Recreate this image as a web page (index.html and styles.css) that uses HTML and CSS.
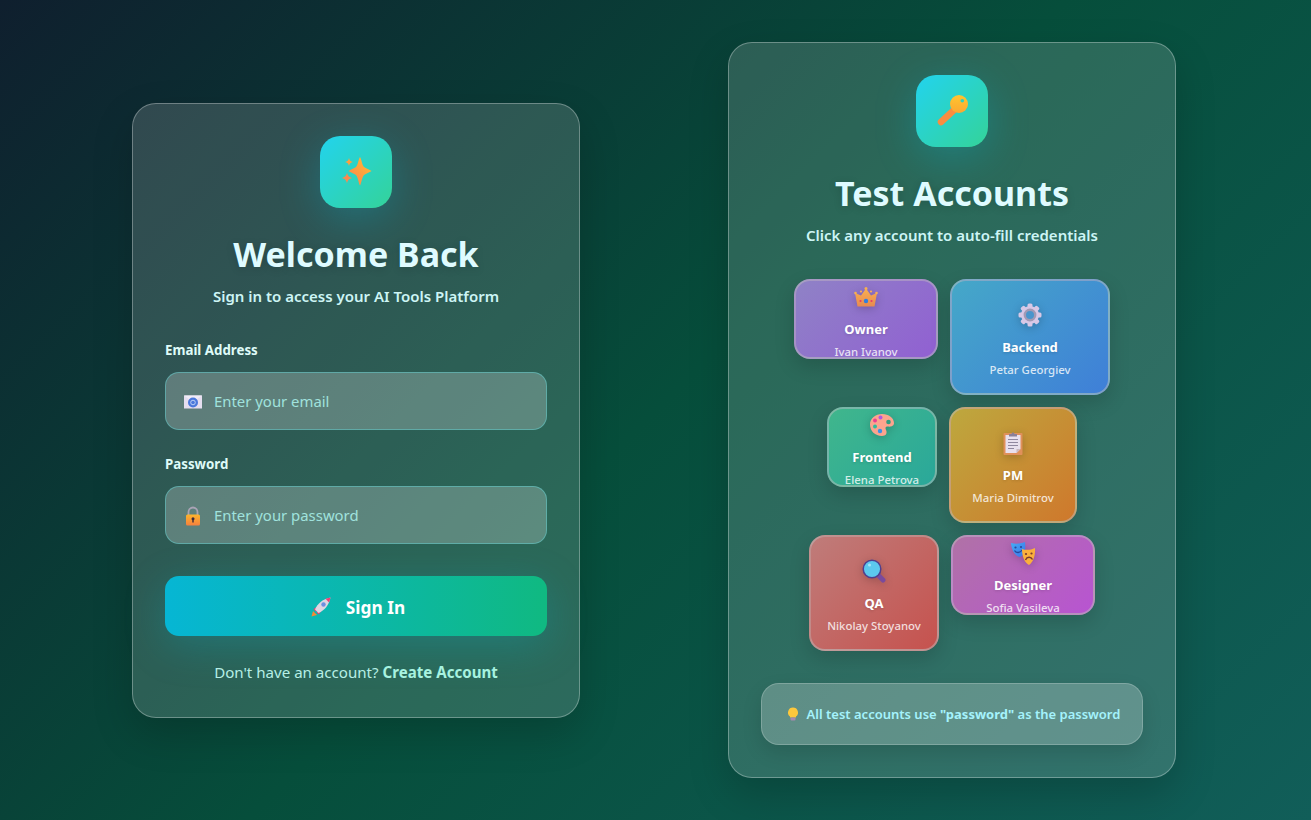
FILE: index.html
```html
<!DOCTYPE html>
<html>
<head>
<meta charset="utf-8"/>
<title>AI Tools Platform - Sign In</title>
<link rel="stylesheet" href="styles.css">
</head>
<body>

<svg class="defs" width="0" height="0" aria-hidden="true">
  <defs>
    <linearGradient id="gold" x1="1" y1="0" x2="0" y2="1"><stop offset="0" stop-color="#ffc030"/><stop offset="1" stop-color="#fb7f50"/></linearGradient>
    <linearGradient id="keyHead" x1="0" y1="0" x2="0" y2="1"><stop offset="0" stop-color="#ffc52e"/><stop offset="1" stop-color="#fba832"/></linearGradient>
    <linearGradient id="lockBody" x1="0" y1="0" x2="0" y2="1"><stop offset="0" stop-color="#fcb52c"/><stop offset="1" stop-color="#f5803e"/></linearGradient>
    <linearGradient id="crownBody" x1="0" y1="0" x2="0" y2="1"><stop offset="0" stop-color="#f8b050"/><stop offset="1" stop-color="#e88a50"/></linearGradient>
    <linearGradient id="blueMask" x1="0" y1="0" x2="1" y2="1"><stop offset="0" stop-color="#42b0f5"/><stop offset="1" stop-color="#3f6fe8"/></linearGradient>
  </defs>
</svg>

<main class="page">

  <section class="card login">
    <div class="logo">
      <svg class="logo-icon" viewBox="0 0 32 32">
        <path fill="url(#gold)" d="M20 1C21.500 3 22 9 24 11C26 12.500 29.500 13.500 31.500 15C29.500 16.500 26 17.500 24 19C22 21 21.500 27 20 29.500C18.500 27 18 21 16 19C14 17.500 10.500 16.500 8.500 15C10.500 13.500 14 12.500 16 11C18 9 18.500 3 20 1Z"/>
        <path fill="#fba040" d="M9 2C9.500 4.500 10.500 5.500 13 6C10.500 6.500 9.500 7.500 9 10C8.500 7.500 7.500 6.500 5 6C7.500 5.500 8.500 4.500 9 2Z"/>
        <path fill="#fb8a50" d="M7 16.500C7.700 20 9 21.300 12.500 22C9 22.700 7.700 24 7 27.500C6.300 24 5 22.700 1.500 22C5 21.300 6.300 20 7 16.500Z"/>
      </svg>
    </div>
    <h1>Welcome Back</h1>
    <p class="subtitle">Sign in to access your AI Tools Platform</p>

    <form class="login-form">
      <label class="field-label" for="email">Email Address</label>
      <div class="field">
        <svg class="field-icon" viewBox="0 0 20 20">
          <rect x="1" y="3.500" width="18" height="13" fill="#e6def0"/>
          <path d="M1 3.500L10 10L19 3.500" fill="#f2edf7"/>
          <circle cx="10" cy="10.500" r="5" fill="#4c78dc"/>
          <circle cx="10" cy="10.500" r="2.300" fill="none" stroke="#bcd0f5" stroke-width="1"/>
        </svg>
        <input id="email" type="email" placeholder="Enter your email">
      </div>

      <label class="field-label" for="password">Password</label>
      <div class="field">
        <svg class="field-icon" viewBox="0 0 20 20">
          <path d="M5.500 10V6a4.500 4.500 0 0 1 9 0v4" fill="none" stroke="#a9a3b5" stroke-width="1.800"/>
          <rect x="3" y="8.500" width="14" height="11" rx="1.500" fill="url(#lockBody)"/>
          <circle cx="10" cy="12.800" r="1.500" fill="#3b2a3a"/>
          <rect x="9.300" y="13" width="1.400" height="3.500" fill="#3b2a3a"/>
        </svg>
        <input id="password" type="password" placeholder="Enter your password">
      </div>

      <button class="submit" type="button">
        <svg class="submit-icon" viewBox="0 0 22 22">
          <path d="M1.500 20.500L3 15L7 19Z" fill="#f58a35"/>
          <path d="M3.500 13L9 9.500L6 16Z" fill="#ee3f78"/>
          <path d="M9 18.500L12.500 13L6.500 16.500Z" fill="#ee3f78"/>
          <path d="M5 13.500C7.500 7.500 13 3 20.500 1.500C19 9 14.500 14.500 8.500 17Z" fill="#e0d6e2"/>
          <path d="M15.500 2.800L20.500 1.500C20.200 3.300 19.700 5 19 6.500Z" fill="#ee3f78"/>
          <circle cx="13.500" cy="8.500" r="2.200" fill="#6f8fe0"/>
        </svg>
        <span>Sign In</span>
      </button>
    </form>

    <p class="signup">Don't have an account? <a href="#">Create Account</a></p>
  </section>

  <section class="card accounts">
    <div class="logo">
      <svg class="logo-icon" viewBox="0 0 32 32">
        <path d="M18 15L5 27" fill="none" stroke="#f98d40" stroke-width="6.500" stroke-linecap="round"/>
        <circle cx="23" cy="9" r="9" fill="url(#keyHead)"/>
        <circle cx="26.300" cy="5.700" r="1.800" fill="#2dd0c0"/>
      </svg>
    </div>
    <h1>Test Accounts</h1>
    <p class="subtitle">Click any account to auto-fill credentials</p>

    <div class="account-list">

      <button class="account owner" type="button">
        <svg class="account-icon" viewBox="0 0 24 24">
          <path d="M3.500 21.500L1 8L7 10.500L12 3.500L17 10.500L23 8L20.500 21.500Z" fill="url(#crownBody)"/>
          <circle cx="1.500" cy="8" r="1.300" fill="#f8b050"/><circle cx="7" cy="6.500" r="1.100" fill="#f8b050"/><circle cx="12" cy="3.500" r="1.500" fill="#f8b050"/><circle cx="17" cy="6.500" r="1.100" fill="#f8b050"/><circle cx="22.500" cy="8" r="1.300" fill="#f8b050"/>
          <circle cx="12" cy="16" r="2.200" fill="#2f7ee0"/><circle cx="6.500" cy="16" r="1.100" fill="#e83a6a"/><circle cx="17.500" cy="16" r="1.100" fill="#e83a6a"/>
        </svg>
        <span class="role">Owner</span>
        <span class="person">Ivan Ivanov</span>
      </button>

      <button class="account backend" type="button">
        <svg class="account-icon" viewBox="0 0 24 24">
          <g fill="#d8c8e6">
            <circle cx="12" cy="12" r="9"/>
            <rect x="9.500" y="0.500" width="5" height="23" rx="1.500"/>
            <rect x="9.500" y="0.500" width="5" height="23" rx="1.500" transform="rotate(45 12 12)"/>
            <rect x="9.500" y="0.500" width="5" height="23" rx="1.500" transform="rotate(90 12 12)"/>
            <rect x="9.500" y="0.500" width="5" height="23" rx="1.500" transform="rotate(135 12 12)"/>
          </g>
          <circle cx="12" cy="12" r="5.200" fill="#4a95cc" stroke="#a19ab5" stroke-width="2.400"/>
        </svg>
        <span class="role">Backend</span>
        <span class="person">Petar Georgiev</span>
      </button>

      <button class="account frontend" type="button">
        <svg class="account-icon" viewBox="0 0 24 24">
          <path d="M12 1C19 1 24 5 24 10C24 13.500 20 14 18 13.500C15.500 13 15 15 16 17C17.500 20 16 23 12 23C5 23 0 18 0 11.500C0 5.500 5.500 1 12 1Z" fill="#fba48e"/>
          <circle cx="10.500" cy="4.500" r="2" fill="#b056e0"/>
          <circle cx="5" cy="7.500" r="2" fill="#ee3f90"/>
          <circle cx="5" cy="13.500" r="2" fill="#2dbd9e"/>
          <circle cx="10" cy="18" r="2.200" fill="#3a90e8"/>
          <circle cx="18.500" cy="9" r="2.300" fill="#2d9c80"/>
        </svg>
        <span class="role">Frontend</span>
        <span class="person">Elena Petrova</span>
      </button>

      <button class="account pm" type="button">
        <svg class="account-icon" viewBox="0 0 24 24">
          <rect x="2.500" y="2" width="19" height="22" rx="1" fill="#e0905a"/>
          <path d="M4.500 4H19.500V18L15.500 22H4.500Z" fill="#e8e0ee"/>
          <path d="M15.500 22V18H19.500Z" fill="#c8b8c0"/>
          <path d="M7 8.500H17M7 11.500H17M7 14.500H17M7 17.500H13" stroke="#9088a0" stroke-width="1"/>
          <path d="M8 5V3H10.500A1.500 1.500 0 0 1 13.500 3H16V5.500H8Z" fill="#8a8098"/>
        </svg>
        <span class="role">PM</span>
        <span class="person">Maria Dimitrov</span>
      </button>

      <button class="account qa" type="button">
        <svg class="account-icon" viewBox="0 0 24 24">
          <path d="M16 16L21 21" stroke="#7a4a9c" stroke-width="5" stroke-linecap="round"/>
          <circle cx="10" cy="10" r="8.800" fill="#5cc8ee" stroke="#4f3f8e" stroke-width="1.500"/>
          <circle cx="7.500" cy="6" r="1.500" fill="#a4e6fa"/>
        </svg>
        <span class="role">QA</span>
        <span class="person">Nikolay Stoyanov</span>
      </button>

      <button class="account designer" type="button">
        <svg class="account-icon wide" viewBox="0 0 26 24">
          <path d="M1 2C5 3 10 3 15 1C16 8 15 14 10 16C5 15 1.500 9 1 2Z" fill="url(#blueMask)"/>
          <circle cx="5.500" cy="6.500" r="1.100" fill="#24489c"/><circle cx="11" cy="6" r="1.100" fill="#24489c"/>
          <path d="M4.500 9.500C6 12.500 10.500 12 12 9" fill="none" stroke="#24489c" stroke-width="1.300"/>
          <path d="M12 8C16 9.500 21 9 25 7C25.500 14 23.500 21 19 24C15 22 12 16 12 8Z" fill="#fbb03c"/>
          <circle cx="16" cy="13" r="1.100" fill="#7a3a30"/><circle cx="21.500" cy="12.500" r="1.100" fill="#7a3a30"/>
          <path d="M15.500 19C17 15.500 21 15.500 22.500 18.500" fill="none" stroke="#7a3a30" stroke-width="1.400"/>
        </svg>
        <span class="role">Designer</span>
        <span class="person">Sofia Vasileva</span>
      </button>

    </div>

    <p class="note">
      <svg class="note-icon" viewBox="0 0 12 14">
        <path d="M6 0.500A5 5 0 0 1 9 9.500V10.500H3V9.500A5 5 0 0 1 6 0.500Z" fill="#fcc83c"/>
        <rect x="3.500" y="10.500" width="5" height="3" rx="1" fill="#a58ab0"/>
      </svg>
      <span>All test accounts use <strong>"password"</strong> as the password</span>
    </p>
  </section>

</main>

</body>
</html>
```

FILE: styles.css
```css
* {
   box-sizing: border-box;
}

body {
   margin: 0;
   height: 820px;
   overflow: hidden;
   font-family: "Noto Sans", sans-serif;
   background: linear-gradient(135deg, #0f1f2e 0%, #064e3b 50%, #115e59 100%);
}

.defs {
   display: block;
   height: 0;
}

.page {
   height: 820px;
   padding-right: 3px;
   display: flex;
   justify-content: center;
   align-items: center;
   gap: 148px;
}

.card {
   width: 448px;
   padding: 32px;
   display: flex;
   flex-direction: column;
   align-items: center;
   border: 1px solid rgba(255, 255, 255, 0.3);
   border-radius: 24px;
   background: rgba(255, 255, 255, 0.15);
   box-shadow: 0 16px 40px rgba(0, 0, 0, 0.18);
}

.logo {
   width: 72px;
   height: 72px;
   display: flex;
   align-items: center;
   justify-content: center;
   border-radius: 20px;
   background: linear-gradient(135deg, #22d3ee, #34d399);
   box-shadow: 0 10px 40px rgba(6, 182, 212, 0.3);
}

.logo-icon {
   width: 32px;
   height: 32px;
}

h1 {
   margin: 22px 0 0;
   font-size: 34px;
   line-height: 48px;
   font-weight: 700;
   color: #dffbff;
   text-shadow: 0 2px 8px rgba(0, 0, 0, 0.15);
}

.subtitle {
   margin: 8px 0 0;
   font-size: 15px;
   line-height: 20px;
   font-weight: 600;
   color: #cdf5f5;
}

.login-form {
   width: 100%;
   margin-top: 35px;
}

.field-label {
   display: block;
   font-size: 13.3px;
   line-height: 18px;
   font-weight: 700;
   color: #dffbf8;
}

.field {
   position: relative;
   margin: 13px 0 25px;
}

.field input {
   display: block;
   width: 100%;
   height: 58px;
   padding: 0 16px 0 48px;
   font-family: inherit;
   font-size: 14.9px;
   color: #dffbf8;
   border: 1px solid rgba(100, 210, 210, 0.5);
   border-radius: 14px;
   background: rgba(255, 255, 255, 0.23);
}

.field input::placeholder {
   color: #a0e2dd;
}

.field-icon {
   position: absolute;
   left: 18px;
   top: 20px;
   width: 20px;
   height: 20px;
}

.submit {
   width: 100%;
   height: 60px;
   margin-top: 32px;
   padding: 3px 0 0 3px;
   display: flex;
   align-items: center;
   justify-content: center;
   gap: 14px;
   border: none;
   border-radius: 14px;
   font-family: inherit;
   font-size: 17.3px;
   font-weight: 700;
   color: #fff;
   background: linear-gradient(90deg, #06b6d4, #10b981);
   box-shadow: 0 10px 40px rgba(6, 182, 212, 0.25);
}

.submit-icon {
   width: 22px;
   height: 22px;
}

.signup {
   margin: 23px 0 0;
   font-size: 15.1px;
   line-height: 26px;
   color: #b6efe6;
}

.signup a {
   font-weight: 700;
   color: #a7f3e0;
   text-decoration: none;
}

.account-list {
   width: 100%;
   margin-top: 34px;
   display: flex;
   flex-wrap: wrap;
   justify-content: center;
   align-items: flex-start;
   gap: 12px;
}

.account {
   height: 116px;
   padding: 6px 0 0;
   display: flex;
   flex-direction: column;
   align-items: center;
   justify-content: center;
   border: 2px solid rgba(190, 190, 190, 0.5);
   border-radius: 16px;
   font-family: inherit;
   color: #fff;
   box-shadow: 0 8px 20px rgba(0, 0, 0, 0.15);
}

.owner {
   width: 144px;
   height: 80px;
   background: linear-gradient(135deg, #8f82c6, #9160d2);
}

.backend {
   width: 160px;
   background: linear-gradient(135deg, #45a8c8, #3f7fd8);
}

.frontend {
   width: 110px;
   height: 80px;
   background: linear-gradient(135deg, #40b68c, #2aa89a);
}

.pm {
   width: 128px;
   background: linear-gradient(135deg, #bda83e, #cf782c);
}

.qa {
   width: 130px;
   background: linear-gradient(135deg, #bf7c7a, #c6524e);
}

.designer {
   width: 144px;
   height: 80px;
   background: linear-gradient(135deg, #b072a6, #b854d2);
}

.account-icon {
   flex: none;
   width: 24px;
   height: 24px;
   filter: drop-shadow(0 2px 4px rgba(0, 0, 0, 0.2));
}

.account-icon.wide {
   width: 26px;
}

.role {
   flex: none;
   margin-top: 11px;
   font-size: 13px;
   line-height: 18px;
   font-weight: 700;
   text-shadow: 0 1px 3px rgba(0, 0, 0, 0.15);
}

.person {
   flex: none;
   margin-top: 6px;
   font-size: 11.4px;
   line-height: 15px;
   font-weight: 500;
   color: rgba(255, 255, 255, 0.8);
}

.note {
   width: 100%;
   height: 62px;
   margin: 32px 0 0;
   padding-left: 3px;
   display: flex;
   align-items: center;
   justify-content: center;
   gap: 8px;
   border: 1px solid rgba(255, 255, 255, 0.2);
   border-radius: 18px;
   font-size: 13px;
   font-weight: 600;
   color: #a5f3fc;
   background: rgba(255, 255, 255, 0.23);
   box-shadow: 0 8px 20px rgba(0, 0, 0, 0.12);
}

.note-icon {
   width: 12px;
   height: 14px;
}

.note strong {
   font-weight: 700;
}
```
